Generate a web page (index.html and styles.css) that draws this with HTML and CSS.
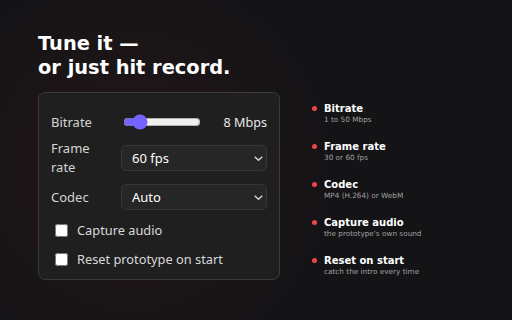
FILE: index.html
```html
<!DOCTYPE html>
<html lang="en">
<head>
  <meta charset="UTF-8">
  <title>Recording settings</title>
  <meta name="viewport" content="width=device-width, initial-scale=1.0">
  <link rel="stylesheet" href="styles.css">
</head>
<body>
  <div class="page">
    <div class="left">
      <h1>Tune it —<br>or just hit record.</h1>

      <div class="panel">
        <div class="row">
          <span class="label">Bitrate</span>
          <input class="slider" type="range" min="1" max="50" value="8">
          <span class="value">8 Mbps</span>
        </div>
        <div class="row">
          <span class="label">Frame<br>rate</span>
          <div class="select">
            <select>
              <option>60 fps</option>
              <option>30 fps</option>
            </select>
            <svg width="9" height="5" viewBox="0 0 9 5"><path d="M0.7 0.7l3.8 3.6 3.8-3.6" fill="none" stroke="#d8d8d8" stroke-width="1.3"/></svg>
          </div>
        </div>
        <div class="row">
          <span class="label">Codec</span>
          <div class="select">
            <select>
              <option>Auto</option>
              <option>MP4 (H.264)</option>
              <option>WebM</option>
            </select>
            <svg width="9" height="5" viewBox="0 0 9 5"><path d="M0.7 0.7l3.8 3.6 3.8-3.6" fill="none" stroke="#d8d8d8" stroke-width="1.3"/></svg>
          </div>
        </div>
        <label class="check"><input type="checkbox"> Capture audio</label>
        <label class="check"><input type="checkbox"> Reset prototype on start</label>
      </div>
    </div>

    <ul class="notes">
      <li><b>Bitrate</b><span>1 to 50 Mbps</span></li>
      <li><b>Frame rate</b><span>30 or 60 fps</span></li>
      <li><b>Codec</b><span>MP4 (H.264) or WebM</span></li>
      <li><b>Capture audio</b><span>the prototype's own sound</span></li>
      <li><b>Reset on start</b><span>catch the intro every time</span></li>
    </ul>
  </div>
</body>
</html>
```

FILE: styles.css
```css
* {
  box-sizing: border-box;
}

body {
  margin: 0;
  width: 512px;
  height: 320px;
  overflow: hidden;
  background: radial-gradient(circle at 130px 170px, #2a1618 0, #1c1517 100px, #141316 210px);
  color: #fff;
  font-family: system-ui, sans-serif;
}

.page {
  display: flex;
  padding: 32px 0 0 38px;
}

.left {
  width: 242px;
}

h1 {
  margin: 0 0 12px;
  font-family: 'DejaVu Sans', sans-serif;
  font-size: 19.4px;
  line-height: 24px;
  font-weight: 700;
  color: #fff;
}

.panel {
  background: #1f1f20;
  border: 1px solid #3a3a3c;
  border-radius: 7px;
  padding: 19px 12px 10px 12px;
  display: flex;
  flex-direction: column;
}

.row {
  display: flex;
  align-items: center;
  min-height: 20px;
}

.row + .row {
  margin-top: 7px;
}

.label {
  width: 70px;
  font-size: 13px;
  line-height: 19px;
  color: #d4d4d4;
}

.slider {
  width: 78px;
  margin: 0 0 0 2px;
  accent-color: #7563ff;
}

.value {
  margin-left: auto;
  font-size: 12.6px;
  color: #e8e8e8;
}

.select {
  position: relative;
  flex: 1;
}

.select select {
  width: 100%;
  height: 26px;
  appearance: none;
  background: #262627;
  border: 1px solid #363638;
  border-radius: 5px;
  color: #fff;
  font-family: inherit;
  font-size: 13px;
  padding: 0 10px;
}

.select svg {
  position: absolute;
  right: 4px;
  top: 11px;
  pointer-events: none;
}

.check {
  display: flex;
  align-items: center;
  gap: 9px;
  font-size: 12.8px;
  color: #d8d8d8;
  margin-top: 10px;
  padding-left: 4px;
  height: 20px;
}

.check + .check {
  margin-top: 9px;
}

.check input {
  margin: 0;
  width: 13px;
  height: 13px;
}

.notes {
  list-style: none;
  margin: 0;
  padding: 70px 0 0 32px;
  font-family: 'DejaVu Sans', sans-serif;
}

.notes li {
  position: relative;
  padding-left: 12px;
  height: 38px;
}

.notes li::before {
  content: '';
  position: absolute;
  left: 0;
  top: 4px;
  width: 5px;
  height: 5px;
  border-radius: 50%;
  background: #f0444b;
}

.notes b {
  display: block;
  font-size: 10px;
  line-height: 13px;
  color: #fff;
}

.notes span {
  display: block;
  font-size: 7.3px;
  line-height: 10px;
  color: #a0a0a0;
}
```
